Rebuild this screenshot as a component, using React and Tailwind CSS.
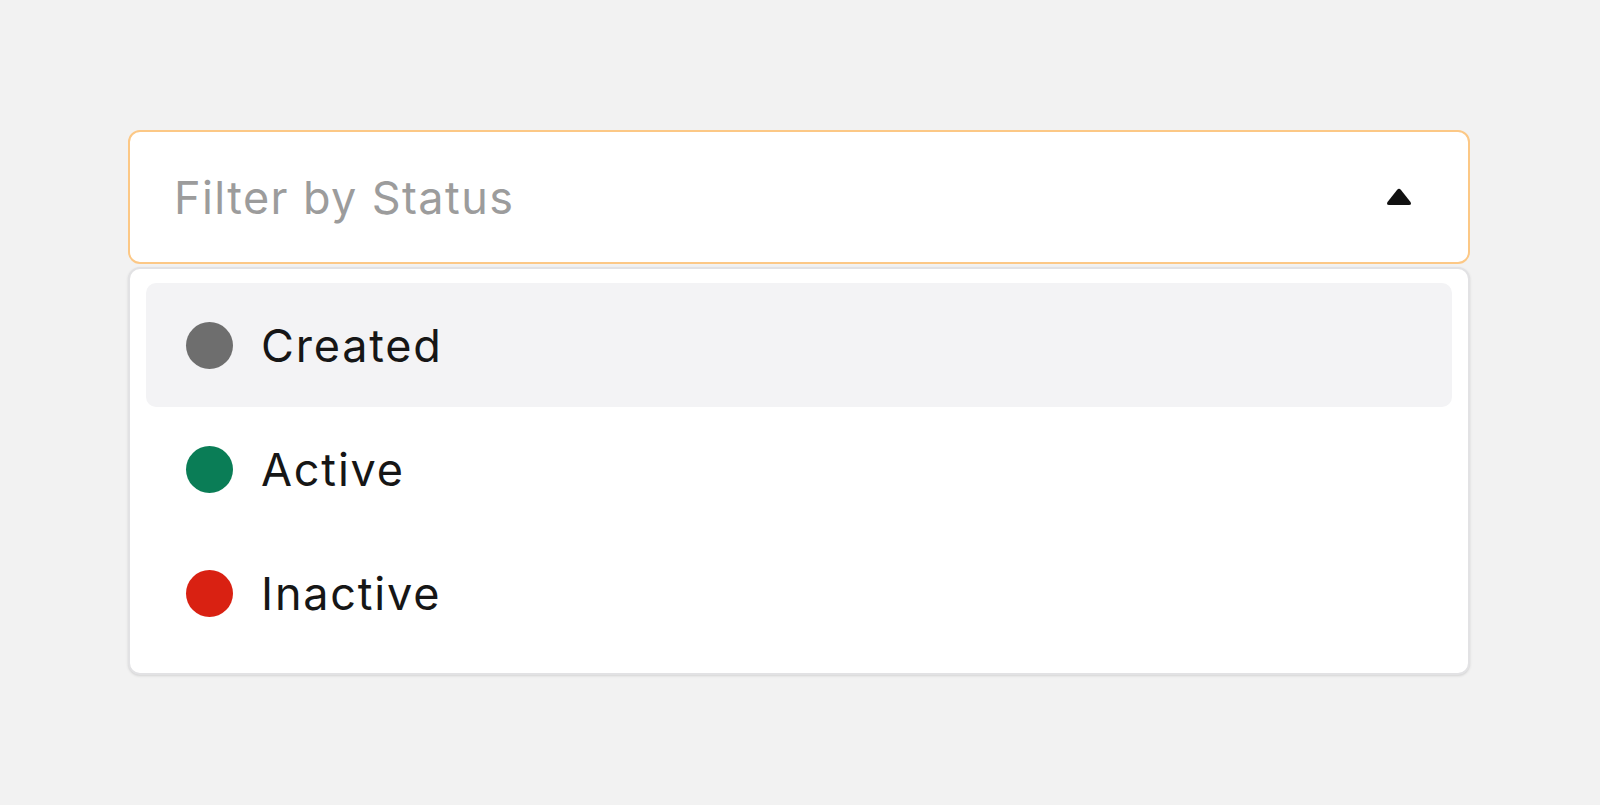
import { useState } from 'react';

const statuses = [
  { label: 'Created', color: 'bg-[#6e6e6e]' },
  { label: 'Active', color: 'bg-[#0a7d56]' },
  { label: 'Inactive', color: 'bg-[#d92112]' },
];

export default function App() {
  const [hovered, setHovered] = useState(0);

  return (
    <div className="min-h-screen w-full bg-[#f2f2f2] pt-[130px] pl-[128px] font-['Inter',sans-serif]">
      <div className="w-[1342px]">
        {/* Trigger */}
        <div className="flex h-[134px] items-center justify-between rounded-[12px] border-2 border-[#fcc886] bg-white pl-[44px] pr-[55px]">
          <span className="text-[45px] leading-none text-[#9c9c9c] tracking-[1.4px]">Filter by Status</span>
          <svg width="28" height="20" viewBox="0 0 28 20">
            <path d="M12 3 Q14 0.5 16 3 L25.5 15 Q27 18 24 18 L4 18 Q1 18 2.5 15 Z" fill="#111" />
          </svg>
        </div>

        {/* Menu */}
        <div className="mt-[3px] rounded-[12px] border-2 border-[#e2e2e4] bg-white px-[16px] pt-[14px] pb-[18px] shadow-sm">
          {statuses.map((s, i) => (
            <div
              key={s.label}
              onMouseEnter={() => setHovered(i)}
              className={`flex h-[124px] items-center gap-[28px] rounded-[10px] pl-[40px] ${hovered === i ? 'bg-[#f3f3f5]' : ''}`}
            >
              <span className={`h-[47px] w-[47px] rounded-full ${s.color}`} />
              <span className="text-[45px] leading-none text-[#161616] tracking-[1.8px]">{s.label}</span>
            </div>
          ))}
        </div>
      </div>
    </div>
  );
}
